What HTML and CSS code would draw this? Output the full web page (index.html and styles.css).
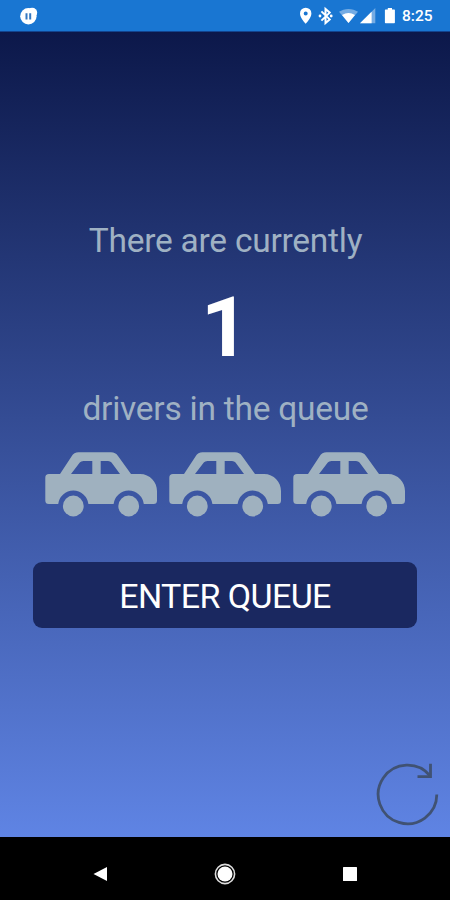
FILE: index.html
```
<!doctype html>
<html lang="en">
<head>
  <meta charset="utf-8">
  <meta name="viewport" content="width=device-width">
  <title>Driver Queue</title>
  <link rel="stylesheet" href="styles.css">
</head>
<body>
<div class="screen">
  <header class="status-bar">
    <svg class="status-app" width="18" height="18" viewBox="0 0 18 18">
      <circle cx="8.4" cy="9.3" r="8.2" fill="#fff"/>
      <circle cx="12.2" cy="5.8" r="5" fill="#fff"/>
      <path d="M6.5 6.2v6.2M10.2 6.2v6.2" stroke="#3478c2" stroke-width="2"/>
    </svg>
    <svg class="status-icons" width="110" height="20" viewBox="0 0 110 20" fill="#fff">
      <path fill-rule="evenodd" d="M7.7 1.7a5.7 5.7 0 0 0-5.7 5.7c0 4.3 5.7 10.3 5.7 10.3s5.7-6 5.7-10.3a5.7 5.7 0 0 0-5.7-5.7zm0 3.7a2 2 0 1 1 0 4 2 2 0 0 1 0-4z"/>
      <path d="M23.4 5.4l8.3 8-4.2 3.7V2.9l4.2 3.7-8.3 8" fill="none" stroke="#fff" stroke-width="2"/>
      <circle cx="22" cy="10" r="1.4"/>
      <circle cx="33.2" cy="10" r="1.4"/>
      <path d="M41 5.8C46.3 1.9 54.7 1.9 60 5.8L50.5 17z" opacity=".4"/>
      <path d="M44 8.9q6.5-3.8 13 0L50.5 17z"/>
      <path d="M62 17.3L77.3 2v15.3z" opacity=".4"/>
      <path d="M62 17.3L73.6 5.7v11.6z"/>
      <path d="M87.5 3.4h2.3V2h4.2v1.4h2.3q.6 0 .6.7v12.5q0 .7-.7.7h-8.6q-.7 0-.7-.7V4.1q0-.7.6-.7z"/>
    </svg>
    <span class="status-time">8:25</span>
  </header>

  <main class="queue">
    <p class="queue-text">There are currently</p>
    <p class="queue-count">1</p>
    <p class="queue-text">drivers in the queue</p>

    <div class="cars">
      <svg class="car" viewBox="0 0 112 65"><use href="#car"/></svg>
      <svg class="car" viewBox="0 0 112 65"><use href="#car"/></svg>
      <svg class="car" viewBox="0 0 112 65"><use href="#car"/></svg>
    </div>

    <button class="button-enter">ENTER QUEUE</button>

    <svg class="refresh" width="66" height="66" viewBox="0 0 66 66">
      <path d="M62.8 33.5A29.3 29.3 0 1 1 56.3 15"/>
      <path d="M56.5 2.8V15.6H43.5"/>
    </svg>
  </main>

  <nav class="nav-bar">
    <svg width="16" height="16" viewBox="0 0 16 16"><path d="M1.5 8L15 1v14z" fill="#fff"/></svg>
    <svg width="22" height="22" viewBox="0 0 22 22">
      <circle cx="11" cy="11" r="9.6" fill="none" stroke="#ddd" stroke-width="1.6"/>
      <circle cx="11" cy="11" r="7.5" fill="#fff"/>
    </svg>
    <svg width="16" height="16" viewBox="0 0 16 16"><rect x="1" y="1" width="14" height="14" rx=".5" fill="#fff"/></svg>
  </nav>
</div>

<svg width="0" height="0" class="symbols">
  <symbol id="car" viewBox="0 0 112 65">
    <path fill-rule="evenodd" d="M4 22H15L26.5 4.5Q29 .3 33.5 .3H66Q70.5 .3 73 4L86 22H95C105 22 112 30 112 39V48.5Q112 52 108.5 52H98.8A15.2 15.2 0 0 0 68.6 52H43.4A15.2 15.2 0 0 0 13.2 52H3.8Q.3 52 .3 48.5V25.7Q.3 22 4 22ZM26 22H47.3V9H38.5Q36 9 34.8 10.5ZM55.7 22H75L66.5 10.5Q65.3 9 63 9H55.7Z"/>
    <circle cx="28.3" cy="54" r="10.4"/>
    <circle cx="83.7" cy="54" r="10.4"/>
  </symbol>
</svg>
</body>
</html>
```
FILE: styles.css
```
html, body, p {
  margin: 0;
  padding: 0;
}

*, *:before, *:after {
  box-sizing: border-box;
}

body {
  font-family: Roboto, sans-serif;
}

svg {
  display: block;
  flex: none;
}

.symbols {
  position: absolute;
}

.screen {
  display: flex;
  flex-direction: column;
  width: 450px;
  height: 900px;
  overflow: hidden;
}

.status-bar {
  display: flex;
  align-items: center;
  height: 32px;
  padding: 1px 16px 0 20px;
  background: #1976d2;
  border-bottom: 1px solid #13448f;
  color: #fff;
}

.status-icons {
  margin-left: auto;
}

.status-time {
  width: 32px;
  margin-left: -6px;
  font-size: 15.5px;
  font-weight: 500;
  line-height: 20px;
  white-space: nowrap;
}

.queue {
  display: flex;
  flex: 1;
  flex-direction: column;
  align-items: center;
  padding-top: 189px;
  background: linear-gradient(#0c184a, #5f84e4);
}

.queue-text {
  padding-left: 1px;
  color: #9fb1c3;
  font-size: 33.5px;
  letter-spacing: -.25px;
  line-height: 40px;
}

.queue-count {
  margin: 17px 0 11px;
  color: #fff;
  font-size: 84px;
  font-weight: bold;
  line-height: 100px;
}

.cars {
  display: flex;
  gap: 12px;
  margin-top: 23px;
}

.car {
  width: 112px;
  height: 65px;
  fill: #9fb1bf;
}

.button-enter {
  width: 384px;
  height: 66px;
  margin-top: 45px;
  padding: 2px 0 0;
  border: 0;
  border-radius: 9px;
  background: #1a2860;
  color: #fff;
  font-family: inherit;
  font-size: 34px;
  letter-spacing: -.6px;
  line-height: 40px;
}

.refresh {
  align-self: flex-end;
  margin: auto 10px 10px 0;
  fill: none;
  stroke: #405273;
  stroke-width: 2.8;
}

.nav-bar {
  display: flex;
  align-items: center;
  justify-content: space-between;
  height: 63px;
  padding: 11px 92px 0;
  background: #000;
}
```
